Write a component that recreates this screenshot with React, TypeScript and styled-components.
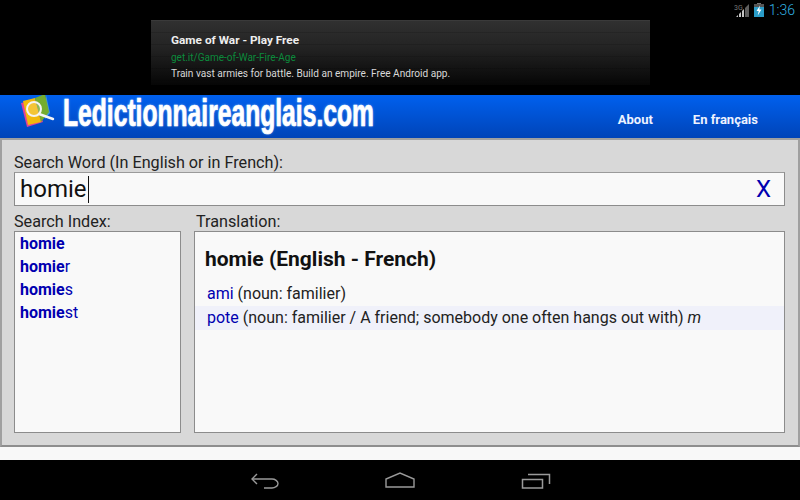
import { createGlobalStyle } from "styled-components";
import styled from "styled-components";

const GlobalStyle = createGlobalStyle`
  html, body {
    margin: 0;
    padding: 0;
    background: #f8f8f8;
  }
  body {
    font-family: Roboto, "Liberation Sans", sans-serif;
  }
`;

const Screen = styled.div`
  width: 800px;
  height: 500px;
  display: flex;
  flex-direction: column;
  overflow: hidden;
  background: #f8f8f8;
`;

const TopArea = styled.div`
  height: 95px;
  background: #000;
  display: flex;
  flex-direction: column;
  flex-shrink: 0;
`;

const StatusBar = styled.div`
  height: 20px;
  display: flex;
  justify-content: flex-end;
  align-items: center;
  gap: 4px;
  padding-right: 5px;
`;

const Clock = styled.span`
  font-size: 14px;
  font-weight: 300;
  color: #33b5e5;
  margin-left: 1px;
`;

const AdBanner = styled.div`
  width: 499px;
  height: 65px;
  margin-left: 151px;
  box-sizing: border-box;
  padding: 11px 0 0 20px;
  border-top: 1px solid #3a3a3a;
  background: repeating-linear-gradient(
      to bottom,
      transparent 0,
      transparent 11px,
      rgba(0, 0, 0, 0.14) 11px,
      rgba(0, 0, 0, 0.14) 12px
    ),
    linear-gradient(to bottom, #303030, #242424 40%, #060606 100%);
`;

const AdTitle = styled.div`
  font-size: 11.8px;
  font-weight: 700;
  line-height: 16px;
  color: #eeeeee;
`;

const AdLink = styled.div`
  font-size: 10px;
  line-height: 16px;
  margin-top: 2px;
  color: #0c8a3c;
`;

const AdBody = styled.div`
  font-size: 10.1px;
  line-height: 16px;
  color: #d8d8d8;
`;

const Header = styled.header`
  height: 43px;
  flex-shrink: 0;
  display: flex;
  align-items: flex-start;
  justify-content: space-between;
  background: linear-gradient(to bottom, #0060ee, #0044b8);
`;

const Brand = styled.div`
  display: flex;
  align-items: flex-start;
  padding-left: 21px;
`;

const BrandName = styled.span`
  font-family: "Liberation Sans", sans-serif;
  font-size: 39px;
  line-height: 36px;
  font-weight: 700;
  color: #fff;
  margin-left: 8px;
  display: inline-block;
  transform-origin: left top;
  transform: scaleX(0.632);
  -webkit-text-stroke: 0.7px #fff;
  text-shadow: 0 0 3px rgba(170, 215, 255, 0.8);
`;

const Nav = styled.nav`
  display: flex;
  gap: 40px;
  padding: 17px 42px 0 0;
`;

const NavLink = styled.a`
  font-size: 13px;
  font-weight: 700;
  line-height: 16px;
  color: #eef3ff;
`;

const Panel = styled.main`
  flex: 1;
  display: flex;
  flex-direction: column;
  box-sizing: border-box;
  margin-bottom: 13px;
  padding: 14px 13px 12px 12px;
  background: #d8d8d8;
  border: 2px solid #a0a0a0;
  border-bottom-color: #8e8e8e;
`;

const FieldLabel = styled.div`
  font-size: 16.2px;
  line-height: 18px;
  color: #222;
`;

const TranslationLabel = styled(FieldLabel)`
  padding-left: 2px;
`;

const SearchBox = styled.div`
  height: 34px;
  flex-shrink: 0;
  box-sizing: border-box;
  display: flex;
  align-items: center;
  justify-content: space-between;
  padding: 0 13px 0 5px;
  background: #f9f9f9;
  border: 1px solid #8c8c8c;
  border-top-color: #9a9a9a;
`;

const SearchValue = styled.div`
  font-size: 24px;
  line-height: 30px;
  color: #111;
  display: flex;
  align-items: center;
`;

const Caret = styled.span`
  width: 1px;
  height: 27px;
  margin-left: 1px;
  background: #111;
`;

const ClearButton = styled.span`
  font-size: 24px;
  line-height: 30px;
  color: #0000b0;
`;

const Columns = styled.div`
  flex: 1;
  display: flex;
  gap: 13px;
  margin-top: 7px;
  min-height: 0;
`;

const IndexColumn = styled.section`
  width: 167px;
  display: flex;
  flex-direction: column;
  flex-shrink: 0;
`;

const TranslationColumn = styled.section`
  flex: 1;
  display: flex;
  flex-direction: column;
`;

const Box = styled.div`
  flex: 1;
  box-sizing: border-box;
  background: #f9f9f9;
  border: 1px solid #8c8c8c;
`;

const IndexList = styled(Box)`
  padding: 0 5px;
`;

const IndexItem = styled.div`
  font-size: 16px;
  line-height: 23px;
  color: #0000b0;
  b {
    font-weight: 700;
  }
`;

const TranslationBox = styled(Box)`
  padding-top: 14px;
`;

const EntryTitle = styled.h2`
  margin: 0 0 10px 10px;
  font-size: 21px;
  line-height: 26px;
  font-weight: 700;
  color: #111;
`;

const Row = styled.div<{ $alt?: boolean }>`
  height: 24px;
  padding-left: 12px;
  font-size: 16px;
  line-height: 24px;
  color: #222;
  background: ${(p) => (p.$alt ? "#f0f1fa" : "transparent")};
  a {
    color: #0000b0;
  }
`;

const NavBar = styled.footer`
  height: 40px;
  flex-shrink: 0;
  background: #000;
  display: flex;
  justify-content: center;
  align-items: center;
  gap: 106px;
  padding-left: 2px;
`;

const SignalIcon = () => (
  <svg width="16" height="14" viewBox="0 0 16 14">
    <text x="0" y="6.5" fontSize="7" fontFamily="Roboto" fill="#777">
      3G
    </text>
    <path d="M2 14l2-2v2zM5 14V11l2-2v5zM8 14V8l2-2v8z" fill="#c4c4c4" />
    <path d="M11 14V5l4-4v13z" fill="#5e5e5e" />
  </svg>
);

const BatteryIcon = () => (
  <svg width="10" height="14" viewBox="0 0 10 14">
    <path d="M3 0h4v1H3z" fill="#777" />
    <path d="M0 1h10v3H0z" fill="#555" />
    <path d="M0 4h10v10H0z" fill="#2a9cc8" />
    <path d="M6 2.5 2.5 8h2.2L3.7 12.5 7.5 6.5H5.3z" fill="#fff" />
  </svg>
);

const LogoIcon = () => (
  <svg width="34" height="34" viewBox="0 0 34 34">
    <path d="M0 8 14 5 22 27 6 32z" fill="#e0409a" />
    <path d="M25 0 29 18 24 24z" fill="#3f9ae0" />
    <path d="M2 6 14 3 20 27 7 30z" fill="#f2b90c" />
    <path d="M14 3 24 -1 28 17 20 27z" fill="#74ad2e" />
    <circle cx="13" cy="14" r="7" fill="rgba(255,255,255,0.18)" stroke="#f4f4f4" strokeWidth="2" />
    <path d="M18 19 32 24" stroke="#f4f4f4" strokeWidth="2.4" strokeLinecap="round" />
  </svg>
);

const BackIcon = () => (
  <svg width="28" height="18" viewBox="0 0 28 18" fill="none" stroke="#9a9a9a" strokeWidth="1.4">
    <path d="M6 3 1 8l5 5" />
    <path d="M1 8h20c3 0 6 2 6 4.5S24 17 21 17h-8" />
  </svg>
);

const HomeIcon = () => (
  <svg width="30" height="16" viewBox="0 0 30 16" fill="none" stroke="#9a9a9a" strokeWidth="1.4">
    <path d="M1 15V7L15 1l14 6v8z" />
  </svg>
);

const RecentIcon = () => (
  <svg width="30" height="18" viewBox="0 0 30 18" fill="none" stroke="#9a9a9a" strokeWidth="1.5">
    <path d="M1.5 8.5h20v8.5h-20z" />
    <path d="M7 3.5h21.5V13" />
  </svg>
);

export default function App() {
  return (
    <Screen>
      <GlobalStyle />
      <TopArea>
        <StatusBar>
          <SignalIcon />
          <BatteryIcon />
          <Clock>1:36</Clock>
        </StatusBar>
        <AdBanner>
          <AdTitle>Game of War - Play Free</AdTitle>
          <AdLink>get.it/Game-of-War-Fire-Age</AdLink>
          <AdBody>Train vast armies for battle. Build an empire. Free Android app.</AdBody>
        </AdBanner>
      </TopArea>
      <Header>
        <Brand>
          <LogoIcon />
          <BrandName>Ledictionnaireanglais.com</BrandName>
        </Brand>
        <Nav>
          <NavLink>About</NavLink>
          <NavLink>En français</NavLink>
        </Nav>
      </Header>
      <Panel>
        <FieldLabel>Search Word (In English or in French):</FieldLabel>
        <SearchBox>
          <SearchValue>
            homie
            <Caret />
          </SearchValue>
          <ClearButton>X</ClearButton>
        </SearchBox>
        <Columns>
          <IndexColumn>
            <FieldLabel>Search Index:</FieldLabel>
            <IndexList>
              <IndexItem>
                <b>homie</b>
              </IndexItem>
              <IndexItem>
                <b>homie</b>r
              </IndexItem>
              <IndexItem>
                <b>homie</b>s
              </IndexItem>
              <IndexItem>
                <b>homie</b>st
              </IndexItem>
            </IndexList>
          </IndexColumn>
          <TranslationColumn>
            <TranslationLabel>Translation:</TranslationLabel>
            <TranslationBox>
              <EntryTitle>homie (English - French)</EntryTitle>
              <Row>
                <a>ami</a> (noun: familier)
              </Row>
              <Row $alt>
                <a>pote</a> (noun: familier / A friend; somebody one often hangs out with) <i>m</i>
              </Row>
            </TranslationBox>
          </TranslationColumn>
        </Columns>
      </Panel>
      <NavBar>
        <BackIcon />
        <HomeIcon />
        <RecentIcon />
      </NavBar>
    </Screen>
  );
}
